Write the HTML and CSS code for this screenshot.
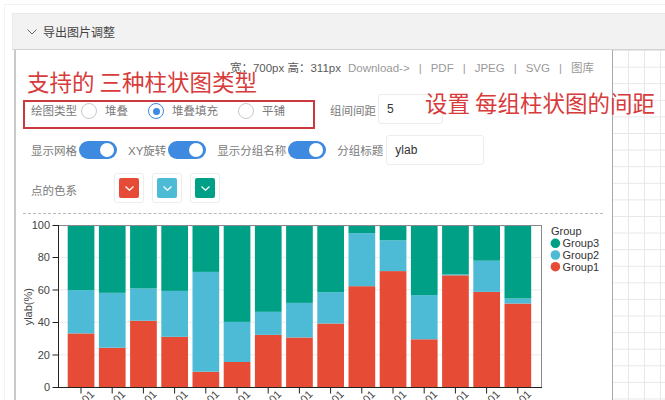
FILE: index.html
```html
<!DOCTYPE html>
<html lang="zh-CN">
<head>
<meta charset="utf-8">
<title>导出图片调整</title>
<link rel="stylesheet" href="styles.css">
</head>
<body>
<div class="frame">
  <div class="panel">
    <div class="panel-head">
      <svg class="chev" width="10" height="6" viewBox="0 0 10 6"><polyline points="0.5,0.5 5,5 9.5,0.5" fill="none" stroke="#666" stroke-width="1"/></svg>
      <span class="panel-title">导出图片调整</span>
    </div>
    <div class="panel-body">
      <div class="editor">
        <div class="toolbar">
          <span class="size">宽：700px 高：311px</span>
          <span>Download-&gt;</span><span>|</span><span>PDF</span><span>|</span><span>JPEG</span><span>|</span><span>SVG</span><span>|</span><span>图库</span>
        </div>
        <div class="row row-type">
          <span class="label label-type">绘图类型</span>
          <span class="radio"></span><span class="opt">堆叠</span>
          <span class="radio checked"></span><span class="opt">堆叠填充</span>
          <span class="radio"></span><span class="opt">平铺</span>
          <span class="label label-gap">组间间距</span>
          <input class="field field-sm" value="5">
        </div>
        <div class="row row-switch">
          <span class="label">显示网格</span><span class="switch"></span>
          <span class="label">XY旋转</span><span class="switch"></span>
          <span class="label">显示分组名称</span><span class="switch"></span>
          <span class="label">分组标题</span><input class="field field-wide" value="ylab">
        </div>
        <div class="row row-color">
          <span class="label label-color">点的色系</span>
          <div class="swatches">
            <span class="swatch"><span class="chip chip-red"><svg width="9" height="5" viewBox="0 0 9 5"><polyline points="0.5,0.5 4.5,4.3 8.5,0.5" fill="none" stroke="#fff" stroke-width="1.2"/></svg></span></span>
            <span class="swatch"><span class="chip chip-blue"><svg width="9" height="5" viewBox="0 0 9 5"><polyline points="0.5,0.5 4.5,4.3 8.5,0.5" fill="none" stroke="#fff" stroke-width="1.2"/></svg></span></span>
            <span class="swatch"><span class="chip chip-green"><svg width="9" height="5" viewBox="0 0 9 5"><polyline points="0.5,0.5 4.5,4.3 8.5,0.5" fill="none" stroke="#fff" stroke-width="1.2"/></svg></span></span>
          </div>
        </div>
        <div class="sep"></div>
        <svg class="chart" width="596" height="186" viewBox="16 214 596 186">
          <g stroke="#ebebeb" stroke-width="1">
            <line x1="59" y1="354.8" x2="541" y2="354.8"/>
            <line x1="59" y1="322.3" x2="541" y2="322.3"/>
            <line x1="59" y1="289.8" x2="541" y2="289.8"/>
            <line x1="59" y1="257.3" x2="541" y2="257.3"/>
          </g>
          <g transform="translate(0,387.3) scale(1,-1.623)">
            <g fill="#E64B35">
              <rect x="67.7" y="0" width="26.7" height="33.2"/>
              <rect x="98.9" y="0" width="26.7" height="24.4"/>
              <rect x="130.1" y="0" width="26.7" height="41.0"/>
              <rect x="161.3" y="0" width="26.7" height="31.1"/>
              <rect x="192.5" y="0" width="26.7" height="9.6"/>
              <rect x="223.7" y="0" width="26.7" height="15.6"/>
              <rect x="254.9" y="0" width="26.7" height="32.3"/>
              <rect x="286.1" y="0" width="26.7" height="30.7"/>
              <rect x="317.3" y="0" width="26.7" height="39.3"/>
              <rect x="348.5" y="0" width="26.7" height="62.3"/>
              <rect x="379.7" y="0" width="26.7" height="71.6"/>
              <rect x="410.9" y="0" width="26.7" height="29.6"/>
              <rect x="442.1" y="0" width="26.7" height="69.0"/>
              <rect x="473.3" y="0" width="26.7" height="58.8"/>
              <rect x="504.5" y="0" width="26.7" height="51.6"/>
            </g>
            <g fill="#4DBBD5">
              <rect x="67.7" y="33.2" width="26.7" height="26.7"/>
              <rect x="98.9" y="24.4" width="26.7" height="33.8"/>
              <rect x="130.1" y="41.0" width="26.7" height="19.9"/>
              <rect x="161.3" y="31.1" width="26.7" height="28.3"/>
              <rect x="192.5" y="9.6" width="26.7" height="61.5"/>
              <rect x="223.7" y="15.6" width="26.7" height="24.7"/>
              <rect x="254.9" y="32.3" width="26.7" height="14.2"/>
              <rect x="286.1" y="30.7" width="26.7" height="21.3"/>
              <rect x="317.3" y="39.3" width="26.7" height="19.3"/>
              <rect x="348.5" y="62.3" width="26.7" height="32.7"/>
              <rect x="379.7" y="71.6" width="26.7" height="19.0"/>
              <rect x="410.9" y="29.6" width="26.7" height="27.2"/>
              <rect x="442.1" y="69.0" width="26.7" height="0.5"/>
              <rect x="473.3" y="58.8" width="26.7" height="19.2"/>
              <rect x="504.5" y="51.6" width="26.7" height="3.1"/>
            </g>
            <g fill="#00A087">
              <rect x="67.7" y="59.9" width="26.7" height="40.1"/>
              <rect x="98.9" y="58.2" width="26.7" height="41.8"/>
              <rect x="130.1" y="60.9" width="26.7" height="39.1"/>
              <rect x="161.3" y="59.4" width="26.7" height="40.6"/>
              <rect x="192.5" y="71.1" width="26.7" height="28.9"/>
              <rect x="223.7" y="40.3" width="26.7" height="59.7"/>
              <rect x="254.9" y="46.5" width="26.7" height="53.5"/>
              <rect x="286.1" y="52.0" width="26.7" height="48.0"/>
              <rect x="317.3" y="58.6" width="26.7" height="41.4"/>
              <rect x="348.5" y="95.0" width="26.7" height="5.0"/>
              <rect x="379.7" y="90.6" width="26.7" height="9.4"/>
              <rect x="410.9" y="56.8" width="26.7" height="43.2"/>
              <rect x="442.1" y="69.5" width="26.7" height="30.5"/>
              <rect x="473.3" y="78.0" width="26.7" height="22.0"/>
              <rect x="504.5" y="54.7" width="26.7" height="45.3"/>
            </g>
          </g>
          <rect x="58.5" y="225.5" width="483" height="162" fill="none" stroke="#8a8a8a" stroke-width="1"/>
          <g stroke="#222" stroke-width="1">
            <line x1="58.5" y1="225" x2="58.5" y2="388"/>
            <line x1="58" y1="387.5" x2="542" y2="387.5"/>
            <line x1="52.5" y1="387.5" x2="58.5" y2="387.5"/>
            <line x1="52.5" y1="355" x2="58.5" y2="355"/>
            <line x1="52.5" y1="322.5" x2="58.5" y2="322.5"/>
            <line x1="52.5" y1="290" x2="58.5" y2="290"/>
            <line x1="52.5" y1="257.5" x2="58.5" y2="257.5"/>
            <line x1="52.5" y1="225.5" x2="58.5" y2="225.5"/>
            <line x1="81" y1="387.5" x2="81" y2="393.5"/>
            <line x1="112.2" y1="387.5" x2="112.2" y2="393.5"/>
            <line x1="143.4" y1="387.5" x2="143.4" y2="393.5"/>
            <line x1="174.6" y1="387.5" x2="174.6" y2="393.5"/>
            <line x1="205.8" y1="387.5" x2="205.8" y2="393.5"/>
            <line x1="237" y1="387.5" x2="237" y2="393.5"/>
            <line x1="268.2" y1="387.5" x2="268.2" y2="393.5"/>
            <line x1="299.4" y1="387.5" x2="299.4" y2="393.5"/>
            <line x1="330.6" y1="387.5" x2="330.6" y2="393.5"/>
            <line x1="361.8" y1="387.5" x2="361.8" y2="393.5"/>
            <line x1="393" y1="387.5" x2="393" y2="393.5"/>
            <line x1="424.2" y1="387.5" x2="424.2" y2="393.5"/>
            <line x1="455.4" y1="387.5" x2="455.4" y2="393.5"/>
            <line x1="486.6" y1="387.5" x2="486.6" y2="393.5"/>
            <line x1="517.8" y1="387.5" x2="517.8" y2="393.5"/>
          </g>
          <g class="axis-text" text-anchor="end">
            <text x="50" y="391">0</text>
            <text x="50" y="358.5">20</text>
            <text x="50" y="326">40</text>
            <text x="50" y="293.5">60</text>
            <text x="50" y="261">80</text>
            <text x="50" y="229">100</text>
          </g>
          <text class="axis-text" text-anchor="middle" transform="translate(32,306.7) rotate(-90)">ylab(%)</text>
          <g class="axis-text" text-anchor="end">
            <text transform="translate(95,395) rotate(-45)">2020-01-01</text>
            <text transform="translate(126.2,395) rotate(-45)">2020-02-01</text>
            <text transform="translate(157.4,395) rotate(-45)">2020-03-01</text>
            <text transform="translate(188.6,395) rotate(-45)">2020-04-01</text>
            <text transform="translate(219.8,395) rotate(-45)">2020-05-01</text>
            <text transform="translate(251,395) rotate(-45)">2020-06-01</text>
            <text transform="translate(282.2,395) rotate(-45)">2020-07-01</text>
            <text transform="translate(313.4,395) rotate(-45)">2020-08-01</text>
            <text transform="translate(344.6,395) rotate(-45)">2020-09-01</text>
            <text transform="translate(375.8,395) rotate(-45)">2020-10-01</text>
            <text transform="translate(407,395) rotate(-45)">2020-11-01</text>
            <text transform="translate(438.2,395) rotate(-45)">2020-12-01</text>
            <text transform="translate(469.4,395) rotate(-45)">2021-01-01</text>
            <text transform="translate(500.6,395) rotate(-45)">2021-02-01</text>
            <text transform="translate(531.8,395) rotate(-45)">2021-03-01</text>
          </g>
          <g class="legend-text">
            <text x="551" y="235">Group</text>
            <circle cx="555.4" cy="243.3" r="4.8" fill="#00A087"/>
            <text x="562.5" y="247.3">Group3</text>
            <circle cx="555.4" cy="255" r="4.8" fill="#4DBBD5"/>
            <text x="562.5" y="259">Group2</text>
            <circle cx="555.4" cy="266.7" r="4.8" fill="#E64B35"/>
            <text x="562.5" y="270.7">Group1</text>
          </g>
        </svg>
        <div class="note note-type">支持的 三种柱状图类型</div>
        <div class="note note-gap">设置 每组柱状图的间距</div>
        <div class="note-box"></div>
      </div>
      <div class="canvas-grid"></div>
    </div>
  </div>
</div>
</body>
</html>
```
FILE: styles.css
```css
html, body {
  margin: 0;
  height: 400px;
  overflow: hidden;
  background: #fff;
}
body {
  font-family: "Liberation Sans", "Noto Sans CJK SC", sans-serif;
  font-size: 11.5px;
  color: #333;
}
.frame {
  margin: 4px 0 0 4px;
  border-top: 1px solid #f3f3f3;
  border-left: 1px solid #f3f3f3;
  padding: 8px 0 0 7px;
}
.panel-head {
  height: 35px;
  background: #f2f2f2;
  border-top: 1px solid #e9e9e9;
  border-left: 1px solid #e9e9e9;
  border-bottom: 1px solid #d3d3d3;
  display: flex;
  align-items: center;
  padding-left: 14px;
}
.chev { display: block; margin-right: 6px; }
.panel-title { font-size: 12px; color: #444; }
.panel-body {
  display: flex;
  height: 350px;
}
.editor {
  position: relative;
  width: 596px;
  margin-left: 2px;
  border-left: 2px solid #cacaca;
  border-right: 1px solid #a9a9a9;
  flex: none;
}
.canvas-grid {
  flex: 1;
  background-color: #fff;
  background-image:
    linear-gradient(to right, transparent 15px, #e7e7e7 15px, #e7e7e7 16px),
    linear-gradient(to bottom, transparent 15.6px, #e7e7e7 15.6px);
  background-size: 16px 16.6px;
  background-position: 0 1px;
}
.toolbar {
  display: flex;
  justify-content: flex-end;
  column-gap: 9px;
  padding: 10px 18px 0 0;
  height: 16px;
  line-height: 16px;
  color: #9a9a9a;
  font-size: 11.5px;
}
.toolbar .size { color: #5a5a5a; margin-right: -2px; }
.row {
  display: flex;
  align-items: center;
  height: 30px;
  padding-left: 15px;
}
.label { color: #7a7a7a; }
.opt { color: #7a7a7a; }
.row-type { margin-top: 19px; }
.label-type { margin-right: 4px; }
.radio {
  width: 14px;
  height: 14px;
  border: 1px solid #c9c9c9;
  border-radius: 50%;
  margin: 2px 8px 0 0;
  display: inline-flex;
  align-items: center;
  justify-content: center;
  background: #fff;
}
.radio.checked { border-color: #3d8ae0; }
.radio.checked::after {
  content: "";
  width: 7px;
  height: 7px;
  border-radius: 50%;
  background: #3d8ae0;
}
.opt { margin-right: 20px; }
.label-gap { margin-left: 25px; margin-right: 2px; }
.field {
  box-sizing: border-box;
  height: 30px;
  border: 1px solid #ececec;
  border-radius: 3px;
  padding: 0 0 0 8px;
  font-family: "Liberation Sans", sans-serif;
  font-size: 12px;
  color: #333;
  outline: none;
  background: #fff;
}
.field-sm { width: 65px; margin-top: -2px; }
.row-switch { margin-top: 10px; }
.row-switch .label { margin-right: 2px; }
.switch {
  position: relative;
  width: 38px;
  height: 18px;
  border-radius: 9px;
  background: #3d8ae0;
  margin-right: 11px;
  flex: none;
}
.switch::after {
  content: "";
  position: absolute;
  right: 3px;
  top: 2px;
  width: 14px;
  height: 14px;
  border-radius: 50%;
  background: #fff;
}
.field-wide { width: 98px; margin-left: 1px; }
.row-color { margin-top: 8px; }
.label-color { margin-right: 37px; margin-top: 4px; }
.swatches { display: flex; gap: 8px; }
.swatch {
  box-sizing: border-box;
  width: 30px;
  height: 30px;
  border: 1px solid #ededed;
  border-radius: 3px;
  background: #fff;
  display: flex;
  align-items: center;
  justify-content: center;
}
.chip {
  width: 20px;
  height: 20px;
  border-radius: 2px;
  display: flex;
  align-items: center;
  justify-content: center;
}
.chip svg { display: block; }
.chip-red { background: #E64B35; }
.chip-blue { background: #4DBBD5; }
.chip-green { background: #00A087; }
.sep {
  margin: 10px 9px 0 7px;
  border-top: 1px dashed #b9b9b9;
}
.chart { display: block; }
.axis-text {
  font-family: "Liberation Sans", sans-serif;
  font-size: 11px;
  fill: #444;
}
.legend-text {
  font-family: "Liberation Sans", sans-serif;
  font-size: 11px;
  fill: #333;
}
.note {
  position: absolute;
  font-family: "Noto Sans CJK SC", sans-serif;
  font-size: 22.5px;
  line-height: 1;
  color: #d83b3b;
  white-space: nowrap;
}
.note-type { left: 11px; top: 20px; }
.note-gap { left: 409px; top: 41px; }
.note-box {
  position: absolute;
  left: 7px;
  top: 50px;
  width: 288px;
  height: 25px;
  border: 2px solid #c9393d;
}
```
